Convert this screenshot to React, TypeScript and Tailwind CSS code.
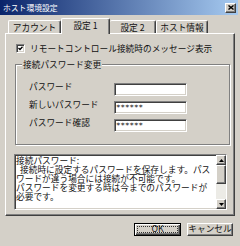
import React from "react";

const raised =
  "border border-t-white border-l-white border-r-[#404040] border-b-[#404040] shadow-[inset_-1px_-1px_0_#808080] bg-[#d4d0c8]";
const sunken =
  "border border-t-[#808080] border-l-[#808080] border-r-white border-b-white shadow-[inset_1px_1px_0_#404040,inset_-1px_-1px_0_#d4d0c8]";

function Arrow({ up }: { up?: boolean }) {
  return (
    <svg width="5" height="3" viewBox="0 0 5 3">
      <polygon points={up ? "2.5,0 5,3 0,3" : "0,0 5,0 2.5,3"} fill="#000" />
    </svg>
  );
}

function PasswordRow({ label, value }: { label: string; value?: string }) {
  return (
    <div className="flex items-start">
      <span className="w-[85px] -mt-[1px] whitespace-nowrap">{label}</span>
      <div className={`w-[73px] h-[13px] bg-white ${sunken} flex items-center pl-[1px]`}>
        <span className="font-['DejaVu_Sans_Mono',monospace] text-[7.5px] leading-none">{value}</span>
      </div>
    </div>
  );
}

export default function App() {
  return (
    <div className="w-[240px] h-[246px] bg-[#d4d0c8] overflow-hidden flex flex-col text-[#111] text-[8.7px] leading-[9px] font-['Noto_Sans_CJK_JP',sans-serif]">
      {/* title bar */}
      <div className="h-[15px] mr-[2px] flex items-center justify-between pl-[3px] pr-[2px] bg-[linear-gradient(90deg,#0a246a,#a6caf0)]">
        <span className="text-white text-[7.8px] leading-none">ホスト環境設定</span>
        <div className={`w-[11px] h-[10px] ${raised} flex items-center justify-center`}>
          <svg width="6" height="5" viewBox="0 0 6 5">
            <path d="M0.5 0.5 L5.5 4.5 M5.5 0.5 L0.5 4.5" stroke="#000" strokeWidth="1.4" />
          </svg>
        </div>
      </div>

      {/* tabs */}
      <div className="h-[18px] flex items-end pl-[8px]">
        <div className="w-[53px] h-[13px] border-t border-l border-r border-t-white border-l-white border-r-[#404040] shadow-[inset_-1px_0_0_#808080] rounded-t-[2px] flex items-center justify-center">
          アカウント
        </div>
        <div className="relative z-10 w-[49px] h-[16px] -mb-[1px] pb-[2px] bg-[#d4d0c8] border-t border-l border-r border-t-white border-l-white border-r-[#404040] shadow-[inset_-1px_0_0_#808080] rounded-t-[2px] flex items-center justify-center whitespace-pre">
          設定 1
        </div>
        <div className="w-[46px] h-[13px] border-t border-r border-t-white border-r-[#404040] shadow-[inset_-1px_0_0_#808080] rounded-t-[2px] flex items-center justify-center whitespace-pre">
          設定 2
        </div>
        <div className="w-[52px] h-[13px] border-t border-l border-r border-t-white border-l-white border-r-[#404040] shadow-[inset_-1px_0_0_#808080] rounded-t-[2px] flex items-center justify-center">
          ホスト情報
        </div>
      </div>

      {/* tab panel */}
      <div className="ml-[5px] w-[230px] h-[183px] border border-t-white border-l-white border-r-[#404040] border-b-[#404040] shadow-[inset_-1px_-1px_0_#808080] flex flex-col">
        <div className="pt-[10px] pl-[10px] flex items-center gap-[5px]">
          <div className={`w-[9px] h-[9px] bg-white ${sunken} flex items-center justify-center`}>
            <svg width="5" height="5" viewBox="0 0 5 5">
              <path d="M0.5 2 L2 3.5 L4.5 0.8" stroke="#000" strokeWidth="1.3" fill="none" />
            </svg>
          </div>
          <span className="whitespace-nowrap">リモートコントロール接続時のメッセージ表示</span>
        </div>

        <fieldset className="ml-[9px] mt-[7px] w-[215px] border border-[#808080] shadow-[1px_1px_0_#fff,inset_1px_1px_0_#fff] pb-[12px]">
          <legend className="ml-[6px] px-[1px] bg-[#d4d0c8] leading-[9px]">接続パスワード変更</legend>
          <div className="pl-[13px] pt-[14px] flex flex-col gap-[5px]">
            <PasswordRow label="パスワード" />
            <PasswordRow label="新しいパスワード" value="******" />
            <PasswordRow label="パスワード確認" value="******" />
          </div>
        </fieldset>

        {/* description */}
        <div className={`ml-[8px] mt-[9px] w-[213px] h-[56px] bg-white ${sunken} flex`}>
          <div className="flex-1 pl-[1px] pt-[1px] whitespace-nowrap overflow-hidden">
            <div>接続パスワード:</div>
            <div>
              <span className="ml-[4px]">接続時に設定するパスワードを保存します。パス</span>
            </div>
            <div>ワードが違う場合には接続が不可能です。</div>
            <div>パスワードを変更する時は今までのパスワードが</div>
            <div>必要です。</div>
          </div>
          <div className="w-[10px] flex flex-col">
            <div className={`h-[10px] ${raised} flex items-center justify-center`}>
              <Arrow up />
            </div>
            <div className="flex-1 bg-[#ecebe6] flex flex-col">
              <div className={`h-[19px] ${raised}`} />
            </div>
            <div className={`h-[10px] ${raised} flex items-center justify-center`}>
              <Arrow />
            </div>
          </div>
        </div>
      </div>

      {/* buttons */}
      <div className="mt-[7px] flex justify-end gap-[6px] pr-[7px]">
        <button className="w-[47px] h-[13px] border border-black shadow-[inset_1px_1px_0_#fff,inset_-1px_-1px_0_#404040,inset_-2px_-2px_0_#808080] bg-[#d4d0c8] p-[2px] flex">
          <span className="flex-1 border border-dotted border-[#333] flex items-center justify-center leading-none">
            OK
          </span>
        </button>
        <button className={`w-[46px] h-[13px] ${raised} flex items-center justify-center leading-none`}>
          キャンセル
        </button>
      </div>
    </div>
  );
}
